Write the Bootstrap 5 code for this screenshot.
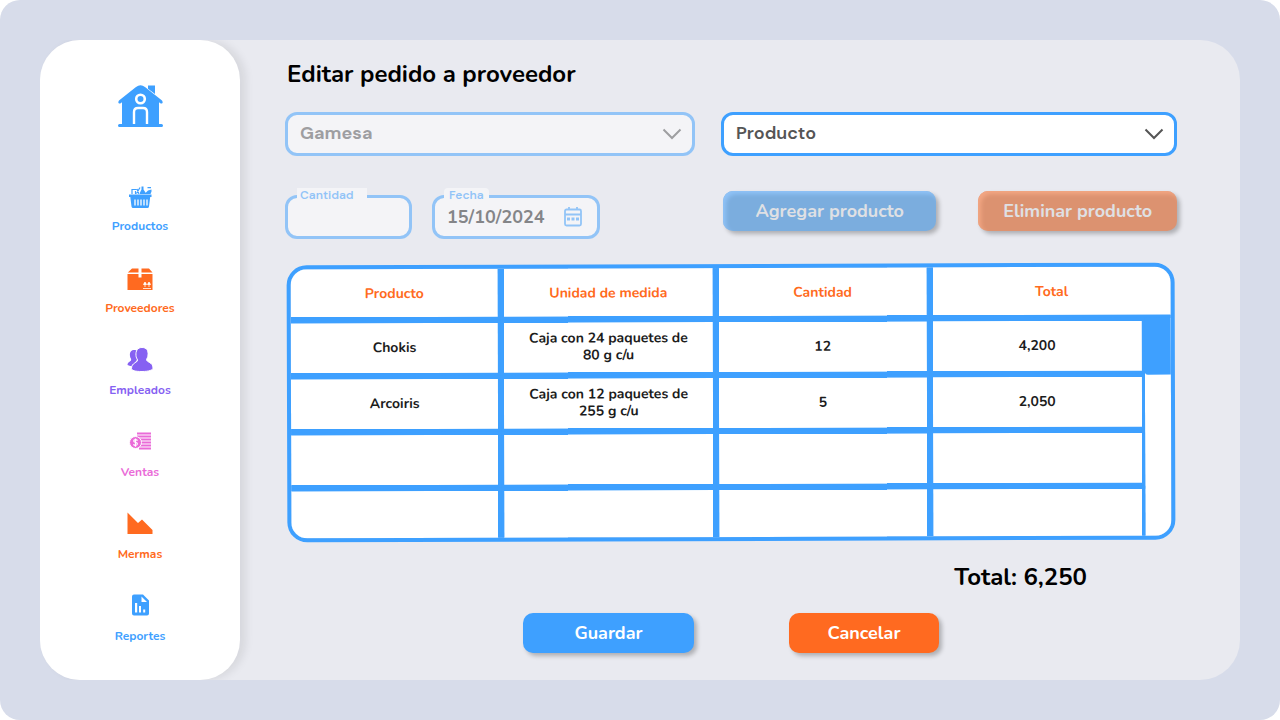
<!DOCTYPE html>
<html lang="es">
<head>
<meta charset="utf-8">
<meta name="viewport" content="width=device-width, initial-scale=1">
<title>Editar pedido a proveedor</title>
<link href="https://cdn.jsdelivr.net/npm/bootstrap@5.3.0/dist/css/bootstrap.min.css" rel="stylesheet">
<style>
  :root { --azul: #3ea0ff; --naranja: #ff6a20; --morado: #8661f2; --rosa: #ea6bd8; }
  body { background: #fff; font-family: Nunito, Lato, sans-serif; color: #000; }
  .marco { min-height: 100vh; padding: 40px; border-radius: 20px; background: #d7dcea; }
  .panel { min-height: calc(100vh - 80px); border-radius: 40px; background: #e9eaf0; }
  .lateral { width: 200px; flex: none; padding: 45px 0 35px; border-radius: 40px; background: #fff; box-shadow: 6px 0 8px rgba(0,0,0,.08); clip-path: inset(0 -20px 0 0); }
  .menu { gap: 30px; margin-top: 56px; }
  .menu a { gap: 6px; font-size: 12px; line-height: 18px; font-weight: 700; text-decoration: none; }
  .menu svg { height: 28px; width: 28px; }
  a.azul { color: var(--azul); } a.naranja { color: var(--naranja); } a.morado { color: var(--morado); } a.rosa { color: var(--rosa); }
  .contenido { padding: 18px 63px 20px 45px; min-width: 0; }
  .titulo, .suma { font-size: 24px; line-height: 32px; font-weight: 700; margin: 0; }
  .titulo { padding-left: 2px; }
  .rejilla { display: grid; grid-template-columns: 410fr 456fr; column-gap: 26px; }
  .filtros { margin-top: 22px; }
  .captura { margin-top: 35px; }
  .campos { gap: 20px; height: 48px; }
  .acciones { gap: 42px; padding-left: 2px; }
  .caja, .caja:disabled { height: 44px; border: 3px solid var(--azul); border-radius: 12px; background-color: #fff; color: #555; font-size: 18px; line-height: 24px; font-weight: 700; opacity: 1; }
  .lista { padding: 5px 40px 7px 12px; font-family: "DM Sans", Inter, sans-serif; font-weight: 600;
    background-image: url("data:image/svg+xml,%3Csvg xmlns='http://www.w3.org/2000/svg' viewBox='0 0 20 12'%3E%3Cpath d='M1.500 1.500L10 10L18.500 1.500' fill='none' stroke='%23555' stroke-width='2'/%3E%3C/svg%3E"); background-size: 20px 12px; background-position: right 10px center; }
  .inactivo { opacity: .5; }
  .etiqueta { position: absolute; top: -7px; left: 12px; padding: 0 3px; z-index: 1; background: #fff; color: var(--azul); font: 600 12px/14px "DM Sans", Inter, sans-serif; }
  .campo { width: 127px; }
  .campo .etiqueta { width: 70px; }
  .fecha { width: 168px; }
  .fecha .etiqueta { border-radius: 4px; padding: 0 5px; }
  .fecha .caja { padding: 0 12px; color: #222; }
  .fecha svg { position: absolute; right: 17px; top: 12px; width: 20px; height: 20px; color: var(--azul); }
  .boton, .boton:disabled { height: 40px; padding: 0 8px; border: 0; border-radius: 10px; color: #fff; font-size: 18px; line-height: 24px; font-weight: 700; opacity: 1; box-shadow: 3px 3px 4px rgba(0,0,0,.25); }
  .boton:disabled { color: #dfe0e4; }
  .agregar:disabled { flex: 214; background: #7badde; box-shadow: 3px 3px 4px rgba(0,0,0,.25), inset 3px 3px 4px #90c3f7; }
  .eliminar:disabled { flex: 198; background: #dc9270; box-shadow: 3px 3px 4px rgba(0,0,0,.25), inset 3px 3px 4px #f3a784; }
  .guardar, .guardar:hover { width: 171px; background: var(--azul); }
  .cancelar, .cancelar:hover { width: 150px; background: var(--naranja); }
  .tablero { margin: 25px 2px 0; border: 4px solid var(--azul); border-radius: 20px; overflow: hidden; background: #fff; transform: rotate(-.18deg); }
  .pedido { width: 100%; table-layout: fixed; border-collapse: separate; border-spacing: 0; font-size: 14px; line-height: 17px; font-weight: 700; text-align: center; color: #1c1c1c; background: var(--azul); }
  .pedido th, .pedido td { height: 56px; padding: 0 20px; vertical-align: middle; border: 3px solid var(--azul); background: #fff padding-box; }
  .pedido th { height: 51px; color: var(--naranja); border-top: 0; }
  .pedido th:first-child, .pedido td:first-child { border-left: 0; }
  .pedido th:last-child { border-right: 0; }
  .pedido tbody td { padding-bottom: 2px; }
  .pedido tbody tr:last-child td { height: 50px; border-bottom: 0; }
  .pedido td.riel { padding: 0; border: 0; vertical-align: top; }
  .pulgar { height: 57px; background: var(--azul); border-radius: 0 0 0 3px; }
  .col-a { width: 23.900%; } .col-b { width: 24.400%; } .col-c { width: 24.300%; }
  .suma { margin-top: 20px; padding-right: 90px; }
  .cierre { gap: 95px; margin-top: 20px; }
</style>
</head>
<body>
<div class="marco">
  <div class="panel d-flex">
    <aside class="lateral d-flex flex-column align-items-center">
      <a href="#" class="azul d-block lh-1" aria-label="Inicio">
        <svg class="d-block" width="45" height="42" viewBox="0 0 45 42" fill="currentColor"><path d="M30 .5h7v8.500L30 3.800Z"/><path d="M18 2Q22.500-1.500 27 2L44 15.500Q45 17 44.500 18Q43.500 19 42 18L41 17.200V39H43.500a1.500 1.500 0 0 1 0 3H1.500a1.500 1.500 0 0 1 0-3H4V17.200L3 18Q1.500 19 .5 18Q0 17 1 15.500Z"/><circle cx="22.500" cy="14" r="4.300" fill="none" stroke="#fff" stroke-width="2.600"/><path d="M16 39V27Q16 23 20 23H25Q29 23 29 27V39" fill="none" stroke="#fff" stroke-width="2.400"/></svg>
      </a>
      <nav class="menu d-flex flex-column">
        <a href="#" class="azul d-flex flex-column align-items-center">
          <svg viewBox="0 0 28 28" fill="currentColor"><path d="M3 11.500h22.500v2.500h-1.300l-1.200 9.500q-.3 1.500-1.500 1.500H7q-1.200 0-1.500-1.500L4.300 14H3z"/><path d="M9 16.500v6M12 16.500v6M15 16.500v6M18 16.500v6M21 16.500v6" stroke="#fff" stroke-width="1.300"/><path d="M6 11V6.500h4.500M9.500 8v3M10.500 10.500 14 4.500M11 6l2 5" fill="none" stroke="currentColor" stroke-width="1.200"/><path d="M15.500 3.500h2v3l2 3v1.500h-5.500V9.500l1.500-3zM19.500 10l2.500-2.500 3.500-1v2l-1 2.500h-5zM21.500 4h3.500v1.300h-3.500z"/></svg>
          Productos</a>
        <a href="#" class="naranja d-flex flex-column align-items-center">
          <svg viewBox="0 0 28 28" fill="currentColor"><path d="M6 3.500h6.500V7.500H1.800zM15.500 3.500H23l3.500 4H15.500z"/><path d="M1.500 9h11v3.500h3V9h11v16h-25z"/><path d="M17 23.500h8M19 22v-4M23 22v-4M17.500 19.500l1.500-2.500 1.500 2.500zM21.500 19.500l1.500-2.500 1.500 2.500z" fill="#fff" stroke="#fff" stroke-width=".8"/></svg>
          Proveedores</a>
        <a href="#" class="morado d-flex flex-column align-items-center">
          <svg viewBox="0 0 28 28" fill="currentColor"><path d="M8 3c-3 0-4.500 2.500-4 6 0 1.500 1 2.500 1.500 3.500 0 2-4 2-4 5.500 2 1 3.500 1 5 1z"/><path d="M8 3c3 0 4 1 4 4l-1 6-4 5-3-1z"/><path d="M16 .5c4.500 0 6.500 3 6 7.500 0 2-1 3-1.500 4.500 0 3 6.500 2.500 6.500 8.500 0 2-4 3.500-11 3.500S5.500 23.500 5.500 21.500c0-6 6-5.500 6-8.500C11 11.500 10 10.500 10 8.500 9.500 4 11.500.5 16 .5z" stroke="#fff" stroke-width="1"/></svg>
          Empleados</a>
        <a href="#" class="rosa d-flex flex-column align-items-center">
          <svg viewBox="0 0 28 28" fill="none" stroke="currentColor"><path d="M11 4.500h14M11 7.500h14M13 10.500h12M14 13.500h11M14 16.500h11M13 19.500h12" stroke-width="1.900"/><circle cx="9.500" cy="13.500" r="6" fill="currentColor" stroke="#fff"/><path d="M11.500 11.600Q10.800 10.600 9.500 10.600Q7.700 10.700 7.700 12Q7.800 13.100 9.500 13.400Q11.400 13.700 11.400 15Q11.200 16.300 9.500 16.400Q8 16.400 7.400 15.400M9.500 9.400v8.300" stroke="#fff" stroke-width="1.200"/></svg>
          Ventas</a>
        <a href="#" class="naranja d-flex flex-column align-items-center">
          <svg viewBox="0 0 28 28" fill="currentColor"><path d="M1.500 1.500 12 12l4-3.500L26.500 19v4h-25z"/></svg>
          Mermas</a>
        <a href="#" class="azul d-flex flex-column align-items-center">
          <svg viewBox="0 0 28 28" fill="currentColor"><path fill-rule="evenodd" d="M8 1.500h9l6 6V20.500a2 2 0 0 1-2 2H8a2 2 0 0 1-2-2V3.500a2 2 0 0 1 2-2zM15.500 3.500v5.500h5.500zM9 10v9.500h2.200V10zm4 3v6.500h2V13zm4.200 3.500v3h2v-3z"/></svg>
          Reportes</a>
      </nav>
    </aside>

    <main class="contenido flex-grow-1">
      <h1 class="titulo">Editar pedido a proveedor</h1>
      <div class="rejilla filtros">
        <div class="inactivo"><select class="form-select caja lista" aria-label="Proveedor" disabled><option>Gamesa</option></select></div>
        <select class="form-select caja lista" aria-label="Producto"><option>Producto</option></select>
      </div>
      <div class="rejilla captura">
        <div class="campos d-flex align-items-end">
          <div class="campo inactivo position-relative">
            <label class="etiqueta" for="cantidad">Cantidad</label>
            <input id="cantidad" class="form-control caja" type="text" disabled>
          </div>
          <div class="fecha inactivo position-relative">
            <label class="etiqueta" for="fecha">Fecha</label>
            <input id="fecha" class="form-control caja" type="text" value="15/10/2024" disabled>
            <svg viewBox="0 0 20 20" fill="none" stroke="currentColor" stroke-width="1.800"><rect x="2" y="2.500" width="16" height="16" rx="1.500"/><path d="M2 7.500h16M6 0v3M14 0v3"/><path d="M4 12h3M8.500 12h3M13 12h3" stroke-width="3"/></svg>
          </div>
        </div>
        <div class="acciones d-flex align-items-start">
          <button type="button" class="btn boton agregar" disabled>Agregar producto</button>
          <button type="button" class="btn boton eliminar" disabled>Eliminar producto</button>
        </div>
      </div>

      <div class="tablero">
        <table class="pedido">
          <colgroup><col class="col-a"><col class="col-b"><col class="col-c"><col class="col-b"><col></colgroup>
          <thead><tr><th scope="col">Producto</th><th scope="col">Unidad de medida</th><th scope="col">Cantidad</th><th scope="col" colspan="2">Total</th></tr></thead>
          <tbody>
            <tr><td>Chokis</td><td>Caja con 24 paquetes de 80 g c/u</td><td>12</td><td>4,200</td><td class="riel" rowspan="4"><div class="pulgar"></div></td></tr>
            <tr><td>Arcoiris</td><td>Caja con 12 paquetes de 255 g c/u</td><td>5</td><td>2,050</td></tr>
            <tr><td></td><td></td><td></td><td></td></tr>
            <tr><td></td><td></td><td></td><td></td></tr>
          </tbody>
        </table>
      </div>

      <p class="suma text-end">Total: 6,250</p>
      <div class="cierre d-flex justify-content-center">
        <button type="button" class="btn boton guardar">Guardar</button>
        <button type="button" class="btn boton cancelar">Cancelar</button>
      </div>
    </main>
  </div>
</div>
<script src="https://cdn.jsdelivr.net/npm/bootstrap@5.3.0/dist/js/bootstrap.bundle.min.js"></script>
</body>
</html>
